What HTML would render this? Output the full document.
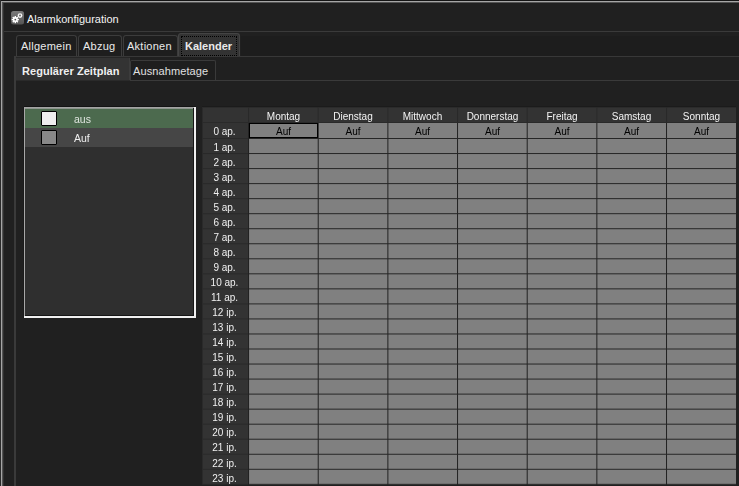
<!DOCTYPE html>
<html><head><meta charset="utf-8"><title>Alarmkonfiguration</title><style>
*{margin:0;padding:0;box-sizing:border-box}
html,body{width:739px;height:486px;overflow:hidden;background:#202020;font-family:"Liberation Sans",sans-serif;font-size:11px;color:#f0f0f0}
.a{position:absolute}
.t{position:absolute;white-space:nowrap;line-height:13px}
.g{will-change:transform}
</style></head><body>
<div class="a" style="left:0px;top:0px;width:739px;height:1px;background:#141414"></div>
<div class="a" style="left:0px;top:0px;width:1px;height:486px;background:#2b2b2b"></div>
<div class="a" style="left:1px;top:1px;width:738px;height:1px;background:#a6a6a6"></div>
<div class="a" style="left:1px;top:1px;width:1px;height:485px;background:#a6a6a6"></div>
<div class="a" style="left:2px;top:2px;width:737px;height:1px;background:#545454"></div>
<div class="a" style="left:2px;top:2px;width:1px;height:484px;background:#545454"></div>
<div class="a" style="left:3px;top:3px;width:1px;height:483px;background:#303030"></div>
<svg class="a" style="left:11px;top:11px" width="13" height="14" viewBox="0 0 13 14">
<defs><linearGradient id="ig" x1="0" y1="0" x2="0" y2="1"><stop offset="0" stop-color="#7a7a7a"/><stop offset="1" stop-color="#555"/></linearGradient></defs>
<rect x="0" y="0" width="13" height="13.5" rx="2.5" fill="url(#ig)"/>
<g fill="#fff">
<circle cx="4.3" cy="8.6" r="2.5"/>
<g transform="translate(4.3 8.6)">
<rect x="-0.7" y="-3.6" width="1.4" height="7.2"/>
<rect x="-0.7" y="-3.6" width="1.4" height="7.2" transform="rotate(45)"/>
<rect x="-0.7" y="-3.6" width="1.4" height="7.2" transform="rotate(90)"/>
<rect x="-0.7" y="-3.6" width="1.4" height="7.2" transform="rotate(135)"/>
</g>
</g>
<circle cx="4.3" cy="8.6" r="0.9" fill="#555"/>
<circle cx="9" cy="4.6" r="1.7" fill="none" stroke="#f4f4f4" stroke-width="1.4"/>
</svg>
<div class="t" style="left:27px;top:13px;color:#f4f4f4">Alarmkonfiguration</div>
<div class="a" style="left:4px;top:31px;width:735px;height:1px;background:#3a3a3a"></div>
<div class="a" style="left:241px;top:36px;width:498px;height:20px;background:#1d1d1d"></div>
<div class="a" style="left:16px;top:35px;width:61px;height:21px;background:#1e1e1e;border:1px solid #3c3c3c;border-bottom:none;border-radius:3px 3px 0 0"></div>
<div class="t" style="left:21px;top:40px;letter-spacing:0.25px;color:#eaeaea">Allgemein</div>
<div class="a" style="left:78px;top:35px;width:44px;height:21px;background:#1e1e1e;border:1px solid #3c3c3c;border-bottom:none;border-radius:3px 3px 0 0"></div>
<div class="t" style="left:83px;top:40px;letter-spacing:0.25px;color:#eaeaea">Abzug</div>
<div class="a" style="left:123px;top:35px;width:55px;height:21px;background:#1e1e1e;border:1px solid #3c3c3c;border-bottom:none;border-radius:3px 3px 0 0"></div>
<div class="t" style="left:127px;top:40px;letter-spacing:0.25px;color:#eaeaea">Aktionen</div>
<div class="a" style="left:178px;top:33px;width:62px;height:23px;background:#333;border:1px solid #444;border-bottom:none;border-radius:3px 3px 0 0"></div>
<div class="t" style="left:185px;top:40px;font-weight:bold;color:#eaeaea">Kalender</div>
<div class="a" style="left:181px;top:36px;width:56px;height:20px;border:1px dotted #000"></div>
<div class="a" style="left:14px;top:56px;width:725px;height:1px;background:#383838"></div>
<div class="a" style="left:16px;top:57px;width:114px;height:1px;background:#262626"></div>
<div class="a" style="left:14px;top:56px;width:2px;height:430px;background:#3a3a3a"></div>
<div class="a" style="left:16px;top:58px;width:114px;height:22px;background:#333;border-right:1px solid #3c3c3c"></div>
<div class="t" style="left:22px;top:65px;font-weight:bold;letter-spacing:0.05px;color:#f0f0f0">Regulärer Zeitplan</div>
<div class="a" style="left:130px;top:60px;width:86px;height:20px;background:#1e1e1e;border:1px solid #3a3a3a;border-bottom:none;border-radius:2px 2px 0 0"></div>
<div class="t" style="left:133px;top:65px;color:#e0e0e0;letter-spacing:0.1px">Ausnahmetage</div>
<div class="a" style="left:16px;top:80px;width:114px;height:1px;background:#2a2a2a"></div>
<div class="a" style="left:130px;top:80px;width:609px;height:1px;background:#3a3a3a"></div>
<div class="a" style="left:24px;top:106px;width:172px;height:1px;background:#141414"></div>
<div class="a" style="left:23px;top:107px;width:1px;height:211px;background:#1a1a1a"></div>
<div class="a" style="left:25px;top:109px;width:168px;height:206px;background:#2f2f2f"></div>
<div class="a" style="left:25px;top:109px;width:168px;height:19px;background:#4c6a4e"></div>
<div class="a" style="left:25px;top:128px;width:168px;height:19px;background:#464646"></div>
<div class="a" style="left:24px;top:107px;width:172px;height:1px;background:#a4a4a4"></div>
<div class="a" style="left:25px;top:108px;width:169px;height:1px;background:#8e968e"></div>
<div class="a" style="left:24px;top:107px;width:1px;height:211px;background:#a8a8a8"></div>
<div class="a" style="left:193px;top:108px;width:1px;height:208px;background:#161616"></div>
<div class="a" style="left:25px;top:315px;width:169px;height:1px;background:#161616"></div>
<div class="a" style="left:194px;top:107px;width:2px;height:211px;background:#f0f0f0"></div>
<div class="a" style="left:24px;top:316px;width:172px;height:2px;background:#f0f0f0"></div>
<div class="a" style="left:41px;top:111px;width:16px;height:15px;background:#eeeeee;border:1px solid #000;border-radius:1px"></div>
<div class="a" style="left:41px;top:130px;width:16px;height:15px;background:#888888;border:1px solid #000;border-radius:1px"></div>
<div class="t g" style="left:74px;top:113px;color:#dfe5df;font-size:10.5px">aus</div>
<div class="t g" style="left:74px;top:132px;color:#eeeeee;font-size:10.5px">Auf</div>
<div class="a" style="left:202px;top:106px;width:534px;height:1px;background:#1b1b1b"></div>
<div class="a" style="left:202px;top:107px;width:534px;height:378px;background:#2a2a2a"></div>
<div class="a" style="left:203px;top:107px;width:533px;height:15px;background:#333"></div>
<div class="a" style="left:203px;top:107px;width:533px;height:1px;background:#2b2b2b"></div>
<div class="a" style="left:203px;top:123px;width:45px;height:362px;background:#333"></div>
<div class="a" style="left:249px;top:123px;width:487px;height:362px;background:#808080"></div>
<svg class="a" style="left:0;top:0" width="739" height="486" viewBox="0 0 739 486">
<rect x="248.06" y="107" width="1" height="15" fill="#2a2a2a"/>
<rect x="248.06" y="122" width="1" height="363" fill="#222"/>
<rect x="317.72" y="107" width="1" height="15" fill="#2a2a2a"/>
<rect x="317.72" y="122" width="1" height="363" fill="#222"/>
<rect x="387.38" y="107" width="1" height="15" fill="#2a2a2a"/>
<rect x="387.38" y="122" width="1" height="363" fill="#222"/>
<rect x="457.04" y="107" width="1" height="15" fill="#2a2a2a"/>
<rect x="457.04" y="122" width="1" height="363" fill="#222"/>
<rect x="526.70" y="107" width="1" height="15" fill="#2a2a2a"/>
<rect x="526.70" y="122" width="1" height="363" fill="#222"/>
<rect x="596.36" y="107" width="1" height="15" fill="#2a2a2a"/>
<rect x="596.36" y="122" width="1" height="363" fill="#222"/>
<rect x="666.02" y="107" width="1" height="15" fill="#2a2a2a"/>
<rect x="666.02" y="122" width="1" height="363" fill="#222"/>
<rect x="203" y="138.00" width="45" height="1" fill="#2a2a2a"/>
<rect x="249" y="138.00" width="487" height="1" fill="#262626"/>
<rect x="203" y="153.04" width="45" height="1" fill="#2a2a2a"/>
<rect x="249" y="153.04" width="487" height="1" fill="#262626"/>
<rect x="203" y="168.07" width="45" height="1" fill="#2a2a2a"/>
<rect x="249" y="168.07" width="487" height="1" fill="#262626"/>
<rect x="203" y="183.11" width="45" height="1" fill="#2a2a2a"/>
<rect x="249" y="183.11" width="487" height="1" fill="#262626"/>
<rect x="203" y="198.14" width="45" height="1" fill="#2a2a2a"/>
<rect x="249" y="198.14" width="487" height="1" fill="#262626"/>
<rect x="203" y="213.18" width="45" height="1" fill="#2a2a2a"/>
<rect x="249" y="213.18" width="487" height="1" fill="#262626"/>
<rect x="203" y="228.22" width="45" height="1" fill="#2a2a2a"/>
<rect x="249" y="228.22" width="487" height="1" fill="#262626"/>
<rect x="203" y="243.25" width="45" height="1" fill="#2a2a2a"/>
<rect x="249" y="243.25" width="487" height="1" fill="#262626"/>
<rect x="203" y="258.29" width="45" height="1" fill="#2a2a2a"/>
<rect x="249" y="258.29" width="487" height="1" fill="#262626"/>
<rect x="203" y="273.32" width="45" height="1" fill="#2a2a2a"/>
<rect x="249" y="273.32" width="487" height="1" fill="#262626"/>
<rect x="203" y="288.36" width="45" height="1" fill="#2a2a2a"/>
<rect x="249" y="288.36" width="487" height="1" fill="#262626"/>
<rect x="203" y="303.40" width="45" height="1" fill="#2a2a2a"/>
<rect x="249" y="303.40" width="487" height="1" fill="#262626"/>
<rect x="203" y="318.43" width="45" height="1" fill="#2a2a2a"/>
<rect x="249" y="318.43" width="487" height="1" fill="#262626"/>
<rect x="203" y="333.47" width="45" height="1" fill="#2a2a2a"/>
<rect x="249" y="333.47" width="487" height="1" fill="#262626"/>
<rect x="203" y="348.50" width="45" height="1" fill="#2a2a2a"/>
<rect x="249" y="348.50" width="487" height="1" fill="#262626"/>
<rect x="203" y="363.54" width="45" height="1" fill="#2a2a2a"/>
<rect x="249" y="363.54" width="487" height="1" fill="#262626"/>
<rect x="203" y="378.58" width="45" height="1" fill="#2a2a2a"/>
<rect x="249" y="378.58" width="487" height="1" fill="#262626"/>
<rect x="203" y="393.61" width="45" height="1" fill="#2a2a2a"/>
<rect x="249" y="393.61" width="487" height="1" fill="#262626"/>
<rect x="203" y="408.65" width="45" height="1" fill="#2a2a2a"/>
<rect x="249" y="408.65" width="487" height="1" fill="#262626"/>
<rect x="203" y="423.68" width="45" height="1" fill="#2a2a2a"/>
<rect x="249" y="423.68" width="487" height="1" fill="#262626"/>
<rect x="203" y="438.72" width="45" height="1" fill="#2a2a2a"/>
<rect x="249" y="438.72" width="487" height="1" fill="#262626"/>
<rect x="203" y="453.76" width="45" height="1" fill="#2a2a2a"/>
<rect x="249" y="453.76" width="487" height="1" fill="#262626"/>
<rect x="203" y="468.79" width="45" height="1" fill="#2a2a2a"/>
<rect x="249" y="468.79" width="487" height="1" fill="#262626"/>
<rect x="203" y="483.83" width="45" height="1" fill="#2a2a2a"/>
<rect x="249" y="483.83" width="487" height="1" fill="#262626"/>
<rect x="203" y="122" width="533" height="1" fill="#2a2a2a"/>
<rect x="736" y="107" width="3" height="379" fill="#202020"/>
<rect x="202" y="484.8" width="537" height="2" fill="#202020"/>
</svg>
<div class="t g" style="left:249px;top:109.5px;width:69px;text-align:center;font-size:10px;color:#f4f4f4">Montag</div>
<div class="t g" style="left:319px;top:109.5px;width:68px;text-align:center;font-size:10px;color:#f4f4f4">Dienstag</div>
<div class="t g" style="left:388px;top:109.5px;width:69px;text-align:center;font-size:10px;color:#f4f4f4">Mittwoch</div>
<div class="t g" style="left:458px;top:109.5px;width:69px;text-align:center;font-size:10px;color:#f4f4f4">Donnerstag</div>
<div class="t g" style="left:528px;top:109.5px;width:68px;text-align:center;font-size:10px;color:#f4f4f4">Freitag</div>
<div class="t g" style="left:597px;top:109.5px;width:69px;text-align:center;font-size:10px;color:#f4f4f4">Samstag</div>
<div class="t g" style="left:667px;top:109.5px;width:69px;text-align:center;font-size:10px;color:#f4f4f4">Sonntag</div>
<div class="t g" style="left:202px;top:125px;width:45px;text-align:center;font-size:10px;color:#f0f0f0">0 ap.</div>
<div class="t g" style="left:202px;top:141px;width:45px;text-align:center;font-size:10px;color:#f0f0f0">1 ap.</div>
<div class="t g" style="left:202px;top:156px;width:45px;text-align:center;font-size:10px;color:#f0f0f0">2 ap.</div>
<div class="t g" style="left:202px;top:171px;width:45px;text-align:center;font-size:10px;color:#f0f0f0">3 ap.</div>
<div class="t g" style="left:202px;top:186px;width:45px;text-align:center;font-size:10px;color:#f0f0f0">4 ap.</div>
<div class="t g" style="left:202px;top:201px;width:45px;text-align:center;font-size:10px;color:#f0f0f0">5 ap.</div>
<div class="t g" style="left:202px;top:216px;width:45px;text-align:center;font-size:10px;color:#f0f0f0">6 ap.</div>
<div class="t g" style="left:202px;top:231px;width:45px;text-align:center;font-size:10px;color:#f0f0f0">7 ap.</div>
<div class="t g" style="left:202px;top:246px;width:45px;text-align:center;font-size:10px;color:#f0f0f0">8 ap.</div>
<div class="t g" style="left:202px;top:261px;width:45px;text-align:center;font-size:10px;color:#f0f0f0">9 ap.</div>
<div class="t g" style="left:202px;top:276px;width:45px;text-align:center;font-size:10px;color:#f0f0f0">10 ap.</div>
<div class="t g" style="left:202px;top:291px;width:45px;text-align:center;font-size:10px;color:#f0f0f0">11 ap.</div>
<div class="t g" style="left:202px;top:306px;width:45px;text-align:center;font-size:10px;color:#f0f0f0">12 ip.</div>
<div class="t g" style="left:202px;top:321px;width:45px;text-align:center;font-size:10px;color:#f0f0f0">13 ip.</div>
<div class="t g" style="left:202px;top:336px;width:45px;text-align:center;font-size:10px;color:#f0f0f0">14 ip.</div>
<div class="t g" style="left:202px;top:351px;width:45px;text-align:center;font-size:10px;color:#f0f0f0">15 ip.</div>
<div class="t g" style="left:202px;top:366px;width:45px;text-align:center;font-size:10px;color:#f0f0f0">16 ip.</div>
<div class="t g" style="left:202px;top:381px;width:45px;text-align:center;font-size:10px;color:#f0f0f0">17 ip.</div>
<div class="t g" style="left:202px;top:396px;width:45px;text-align:center;font-size:10px;color:#f0f0f0">18 ip.</div>
<div class="t g" style="left:202px;top:411px;width:45px;text-align:center;font-size:10px;color:#f0f0f0">19 ip.</div>
<div class="t g" style="left:202px;top:426px;width:45px;text-align:center;font-size:10px;color:#f0f0f0">20 ip.</div>
<div class="t g" style="left:202px;top:441px;width:45px;text-align:center;font-size:10px;color:#f0f0f0">21 ip.</div>
<div class="t g" style="left:202px;top:457px;width:45px;text-align:center;font-size:10px;color:#f0f0f0">22 ip.</div>
<div class="t g" style="left:202px;top:472px;width:45px;text-align:center;font-size:10px;color:#f0f0f0">23 ip.</div>
<div class="t g" style="left:249px;top:125px;width:69px;text-align:center;font-size:10px;color:#000">Auf</div>
<div class="t g" style="left:319px;top:125px;width:68px;text-align:center;font-size:10px;color:#000">Auf</div>
<div class="t g" style="left:388px;top:125px;width:69px;text-align:center;font-size:10px;color:#000">Auf</div>
<div class="t g" style="left:458px;top:125px;width:69px;text-align:center;font-size:10px;color:#000">Auf</div>
<div class="t g" style="left:528px;top:125px;width:68px;text-align:center;font-size:10px;color:#000">Auf</div>
<div class="t g" style="left:597px;top:125px;width:69px;text-align:center;font-size:10px;color:#000">Auf</div>
<div class="t g" style="left:667px;top:125px;width:69px;text-align:center;font-size:10px;color:#000">Auf</div>
<div class="a" style="left:249px;top:123px;width:69px;height:15px;border:1px solid #000"></div>
</body></html>
